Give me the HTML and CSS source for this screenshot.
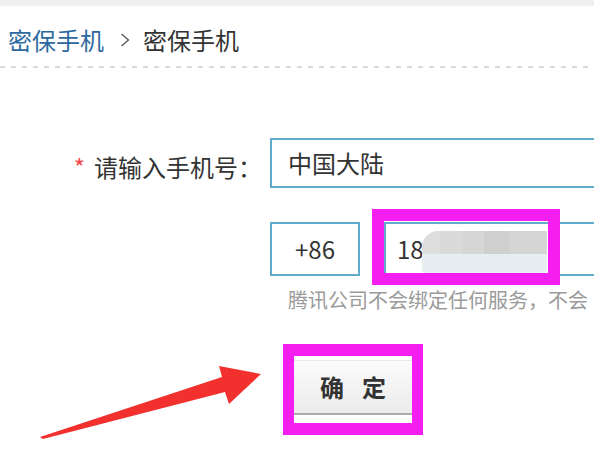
FILE: index.html
```html
<!DOCTYPE html>
<html lang="zh-CN">
<head>
<meta charset="utf-8">
<title>密保手机</title>
<link rel="stylesheet" href="styles.css">
</head>
<body>
<div class="topbar"></div>
<div class="crumbs">
  <a class="crumb-link" href="#">密保手机</a>
  <svg class="crumb-sep" width="10" height="14" viewBox="0 0 10 14"><path d="M1.5 1 L8.5 7 L1.5 13" fill="none" stroke="#555" stroke-width="1.3"/></svg>
  <span class="crumb-current">密保手机</span>
</div>
<div class="dash"></div>

<div class="form">
  <div class="row row-country">
    <div class="label"><span class="star">*</span>请输入手机号：</div>
    <div class="field field-country">中国大陆</div>
  </div>
  <div class="row row-phone">
    <div class="field field-code">+86</div>
    <div class="field field-phone">18<div class="mosaic"></div></div>
  </div>
  <div class="hint">腾讯公司不会绑定任何服务，不会</div>
  <button class="submit" type="button"><span>确</span><span>定</span></button>
</div>

<div class="mark mark-phone"></div>
<div class="mark mark-button"></div>
<svg class="arrow" width="594" height="450" viewBox="0 0 594 450">
  <polygon points="40,437 222,377 219,366 261,374 229,404 225,392 43,439" fill="#f2302e"/>
</svg>
</body>
</html>
```

FILE: styles.css
```css
html, body {
  margin: 0;
  padding: 0;
  background: #ffffff;
}
body {
  width: 594px;
  height: 450px;
  overflow: hidden;
  position: relative;
  font-family: "Noto Sans CJK SC", "Noto Sans", sans-serif;
  color: #333333;
}
.topbar {
  height: 6px;
  background: #efefef;
}
.crumbs {
  display: flex;
  align-items: center;
  padding: 19px 0 0 8px;
  height: 30px;
  font-size: 24px;
  line-height: 30px;
}
.crumb-link {
  color: #2c69a0;
  text-decoration: none;
}
.crumb-sep {
  flex-shrink: 0;
  margin: 0 13px 0 16px;
}
.crumb-current {
  color: #333333;
}
.dash {
  margin-top: 11px;
  height: 2px;
  background: repeating-linear-gradient(90deg, #dadada 0 5px, transparent 5px 11px);
}
.form {
  padding-top: 70px;
}
.row {
  display: flex;
  align-items: flex-start;
}
.label {
  flex-shrink: 0;
  width: 262px;
  padding-top: 4px;
  display: flex;
  justify-content: flex-end;
  font-size: 24px;
  line-height: 50px;
  color: #333333;
}
.star {
  color: #f0484a;
  margin-right: 9px;
}
.field {
  box-sizing: border-box;
  border: 2px solid #62abcb;
  border-right: 0;
  background: #ffffff;
  font-size: 24px;
  color: #333333;
}
.field-country {
  margin-left: 8px;
  flex: 1;
  height: 50px;
  line-height: 46px;
  padding-left: 16px;
}
.row-phone {
  margin-top: 30px;
  padding-left: 270px;
}
.field-code {
  flex-shrink: 0;
  width: 90px;
  height: 54px;
  line-height: 50px;
  text-align: center;
  border-right: 2px solid #62abcb;
}
.field-phone {
  position: relative;
  margin-left: 24px;
  flex: 1;
  height: 54px;
  line-height: 50px;
  padding-left: 11px;
}
.mosaic {
  position: absolute;
  left: 36px;
  top: 7px;
  width: 125px;
  height: 47px;
  border-radius: 16px 0 0 10px;
  background:
    linear-gradient(180deg, transparent 0 23px, #e7eef1 23px 100%),
    linear-gradient(90deg, #dedede 0 18px, #dadada 18px 40px, #d6d6d6 40px 62px, #d0cfcf 62px 88px, #d5d5d5 88px 125px);
}
.hint {
  margin: 12px 0 0 288px;
  font-size: 20px;
  line-height: 24px;
  color: #9a9a9a;
  white-space: nowrap;
}
.submit {
  display: flex;
  justify-content: center;
  gap: 18px;
  margin: 48px 0 0 294px;
  width: 118px;
  height: 55px;
  padding: 0;
  border: 0;
  border-top: 1px solid #e6e6e6;
  border-bottom: 2px solid #acacac;
  background: linear-gradient(180deg, #fbfbfb, #ebebeb);
  font-family: "Noto Sans CJK SC", "Noto Sans", sans-serif;
  font-size: 24px;
  font-weight: bold;
  line-height: 52px;
  color: #333333;
}
.mark {
  position: absolute;
  box-sizing: border-box;
  border: 12px solid #f51ef0;
}
.mark-phone {
  left: 372px;
  top: 209px;
  width: 188px;
  height: 76px;
}
.mark-button {
  left: 283px;
  top: 344px;
  width: 140px;
  height: 91px;
  border-width: 12px 11px 12px 11px;
}
.arrow {
  position: absolute;
  left: 0;
  top: 0;
  pointer-events: none;
}
```
